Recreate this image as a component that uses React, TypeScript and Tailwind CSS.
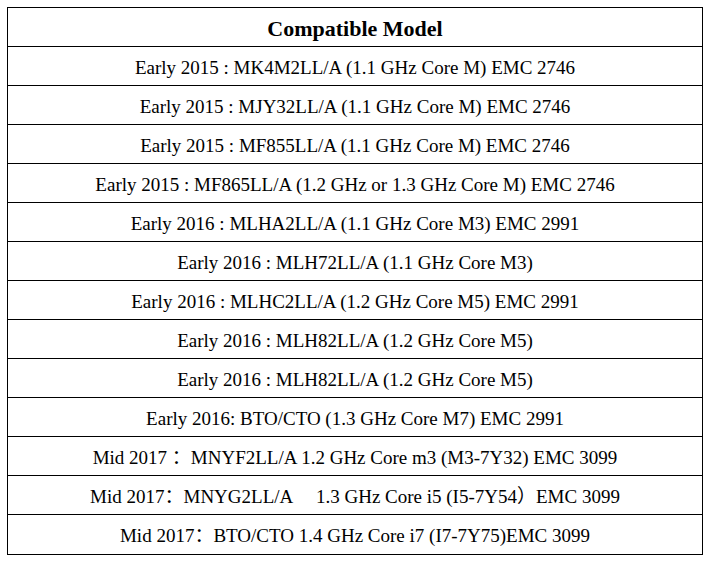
const models = [
  "Early 2015 : MK4M2LL/A (1.1 GHz Core M) EMC 2746",
  "Early 2015 : MJY32LL/A (1.1 GHz Core M) EMC 2746",
  "Early 2015 : MF855LL/A (1.1 GHz Core M) EMC 2746",
  "Early 2015 : MF865LL/A (1.2 GHz or 1.3 GHz Core M) EMC 2746",
  "Early 2016 : MLHA2LL/A (1.1 GHz Core M3) EMC 2991",
  "Early 2016 : MLH72LL/A (1.1 GHz Core M3)",
  "Early 2016 : MLHC2LL/A (1.2 GHz Core M5) EMC 2991",
  "Early 2016 : MLH82LL/A (1.2 GHz Core M5)",
  "Early 2016 : MLH82LL/A (1.2 GHz Core M5)",
  "Early 2016: BTO/CTO (1.3 GHz Core M7) EMC 2991",
  "Mid 2017 ：MNYF2LL/A 1.2 GHz Core m3 (M3-7Y32) EMC 3099",
  "Mid 2017：MNYG2LL/A　 1.3 GHz Core i5 (I5-7Y54）EMC 3099",
  "Mid 2017：BTO/CTO 1.4 GHz Core i7 (I7-7Y75)EMC 3099",
]

export default function App() {
  return (
    <div className="w-[711px] h-[570px] bg-white pt-[7px] pl-[7px] font-['Liberation_Serif','Noto_Sans_CJK_SC',serif] text-black">
      <div className="w-[696px] border border-black">
        {/* header */}
        <div className="h-[39px] flex items-center justify-center pt-[2px] text-[22px] font-bold border-b border-black">
          Compatible Model
        </div>
        {models.map((m, i) => (
          <div
            key={i}
            className={`h-[39px] flex items-center justify-center pt-[4px] text-[19px] whitespace-pre ${i < models.length - 1 ? "border-b border-black" : ""}`}
          >
            {m}
          </div>
        ))}
      </div>
    </div>
  )
}
